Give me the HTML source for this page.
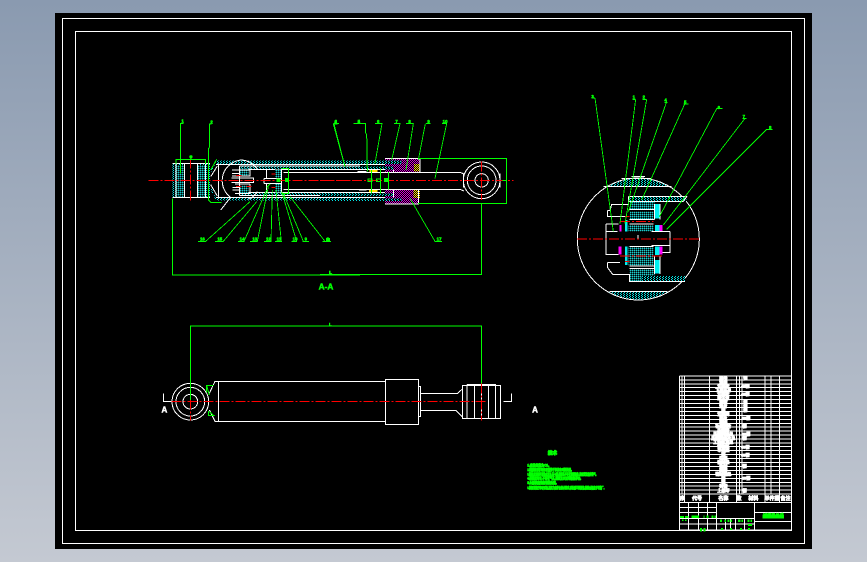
<!DOCTYPE html>
<html>
<head>
<meta charset="utf-8">
<style>
html,body{margin:0;padding:0;width:867px;height:562px;overflow:hidden;background:#8a9ab0}
svg{display:block}
.w{fill:none;stroke:#fff;stroke-width:3}
.g{fill:none;stroke:#00ff00;stroke-width:3}
.g1{fill:none;stroke:#00ff00;stroke-width:2.6}
.r{fill:none;stroke:#ff0000;stroke-width:3;stroke-dasharray:30 6 6 6}
text{font-family:"Liberation Sans","Noto Sans CJK SC",sans-serif}
.t{fill:#00ff00;stroke:#00ff00;stroke-width:1.6;font-size:13px;font-weight:bold}
.n{fill:#fff;stroke:#fff;stroke-width:2.6;font-size:12px;font-weight:bold;text-anchor:middle}
.h{fill:#fff;stroke:#fff;stroke-width:2.2;font-size:15px;font-weight:bold;text-anchor:middle}
.s{fill:#00ff00;stroke:#00ff00;stroke-width:2.6;font-size:11px;font-weight:bold}
</style>
</head>
<body>
<svg width="867" height="562" viewBox="0 0 867 562" xmlns="http://www.w3.org/2000/svg" shape-rendering="crispEdges">
<defs>
<linearGradient id="bg" x1="0" y1="0" x2="0" y2="1"><stop offset="0" stop-color="#8a9ab0"/><stop offset="1" stop-color="#c4c9d2"/></linearGradient>
<pattern id="c" width="9" height="6" patternUnits="userSpaceOnUse"><rect width="9" height="6" fill="#000"/><rect width="3" height="3" fill="#00e5e5"/><rect x="6" y="3" width="3" height="3" fill="#00e5e5"/></pattern>
<pattern id="cd" width="6" height="6" patternUnits="userSpaceOnUse"><rect width="6" height="6" fill="#075c5c"/><rect width="3" height="3" fill="#20c8c8"/><rect x="3" y="3" width="3" height="3" fill="#000"/></pattern>
<pattern id="m" width="6" height="6" patternUnits="userSpaceOnUse"><rect width="6" height="6" fill="#000"/><rect width="3" height="3" fill="#d000d0"/><rect x="3" y="3" width="3" height="3" fill="#d000d0"/></pattern>
<pattern id="y" width="6" height="6" patternUnits="userSpaceOnUse"><rect width="6" height="6" fill="#000"/><rect width="3" height="3" fill="#ffe000"/><rect x="3" y="3" width="3" height="3" fill="#ffe000"/></pattern>
<clipPath id="cc"><circle cx="205" cy="447" r="183"/></clipPath>
</defs>
<rect width="867" height="562" fill="url(#bg)"/>
<rect x="55" y="13" width="757" height="536" fill="#000"/>
<rect x="62.5" y="18.5" width="742" height="525" fill="none" stroke="#fff"/>
<rect x="75.5" y="31.5" width="716" height="499" fill="none" stroke="#fff"/>

<!-- Section A-A left part -->
<g transform="translate(140,110) scale(.33333)">
<rect x="97" y="162" width="36" height="100" fill="url(#c)"/>
<rect x="172" y="162" width="38" height="100" fill="url(#c)"/>
<rect x="110" y="165" width="22" height="95" fill="url(#cd)"/>
<rect x="172" y="165" width="24" height="95" fill="url(#cd)"/>
<path class="w" d="M97 161H210M97 262H210M133 160V262M172 160V262M108 162V262M197 162V262"/>
<rect x="228" y="152" width="432" height="10" fill="url(#c)"/>
<rect x="228" y="262" width="432" height="10" fill="url(#c)"/>
<rect x="298" y="170" width="362" height="8" fill="url(#c)"/>
<rect x="298" y="248" width="362" height="8" fill="url(#c)"/>
<path d="M232 150L212 190V230L232 272H228L208 232V188Z" fill="url(#c)"/>
<path class="w" d="M235 160V266M228 163H660M228 263H660M298 168H660M298 179H660M298 247H660M298 257H660M298 168V257M212 200L232 168M212 224L232 258M430 187H655M430 238H655"/>
<path class="w" d="M305 150A62 62 0 0 0 272 262L242 300M305 150A62 62 0 0 1 352 178M352 245A62 62 0 0 1 325 268"/>
<rect x="300" y="176" width="26" height="20" fill="url(#cd)"/>
<rect x="300" y="226" width="26" height="24" fill="url(#cd)"/>
<rect x="405" y="178" width="20" height="26" fill="url(#cd)"/>
<rect x="405" y="222" width="20" height="26" fill="url(#cd)"/>
<path class="w" d="M276 180H330M276 190H300M276 198H330M274 204H340V218H274M285 222H330M278 232H300M278 240H300M285 250H330M330 172V200M330 222V252M372 205H425M372 220H425M372 205V220M380 178V204M380 222V248M380 178H405M380 248H405M425 178V248"/>
<path d="M288 197H304M288 230H304M320 229H334M395 192H406M395 232H406" stroke="#f00" stroke-width="3"/>
<path class="r" d="M25 211H660"/>
<path class="r" d="M152 145V272"/>
<path class="g" d="M121 190V41H131M215 42H208V112L205 117V270L212 277H245M580 41L615 170M581 41H597M640 41H660M97 265V495H660M108 162V148H197V162M425 176H445V250H425M230 148L212 180"/>
<path class="g1" d="M174 394H197L330 275M225 394H250L350 275M294 394H312L380 240M330 394H352L385 230M372 394H393L397 240M405 394H424L408 240M455 394H470L425 245M488 394H507M490 394L430 250M548 394H573M555 394L450 260M380 232L390 222"/>
<rect x="410" y="206" width="12" height="10" fill="#0f0"/><rect x="435" y="204" width="10" height="12" fill="#0f0"/>
<text class="t" x="124" y="38">1</text><text class="t" x="211" y="40">2</text><text class="t" x="584" y="39">3</text><text class="t" x="653" y="39">4</text>
<text class="t" x="148" y="144">φ</text>
<text class="t" x="180" y="392">16</text><text class="t" x="232" y="392">15</text><text class="t" x="299" y="392">14</text><text class="t" x="337" y="392">13</text><text class="t" x="378" y="392">12</text><text class="t" x="410" y="392">11</text><text class="t" x="458" y="392">10</text><text class="t" x="494" y="392">9</text><text class="t" x="560" y="392">8</text>
<text class="t" x="568" y="492">L</text>
<text x="536" y="538" textLength="44" lengthAdjust="spacingAndGlyphs" style="font-size:25px;fill:#0f0;stroke:#0f0;stroke-width:1.5;font-weight:bold">A-A</text>
</g>

<!-- Section A-A right part -->
<g transform="translate(320,110) scale(.33333)">
<rect x="195" y="145" width="105" height="43" fill="url(#m)"/>
<rect x="195" y="238" width="100" height="44" fill="url(#m)"/>
<rect x="0" y="152" width="245" height="10" fill="url(#c)"/>
<rect x="0" y="265" width="245" height="8" fill="url(#c)"/>
<rect x="0" y="170" width="220" height="8" fill="url(#c)"/>
<rect x="0" y="250" width="220" height="8" fill="url(#c)"/>
<path d="M148 177H172V187H148ZM147 240H172V249H147Z" fill="#ffe000"/>
<path d="M282 162H300V184H282ZM280 240H300V264H280Z" fill="url(#y)"/>
<path class="w" d="M0 187H420M0 238H420M113 184H140M117 240H140M195 145H300V187M195 282H295V240M0 163H195M0 263H195M0 179H195M0 248H195M220 178V187M220 240V262M420 187L432 192M420 238L432 243"/>
<circle class="w" cx="485" cy="211" r="55"/>
<circle class="w" cx="485" cy="211" r="43"/>
<circle class="w" cx="485" cy="211" r="20"/>
<path class="w" d="M430 190V232M540 190V232"/>
<path class="r" d="M0 211H580"/>
<path class="r" d="M485 155V270"/>
<path class="g" d="M294 145H560V280H294M485 280V493H0M548 211H560M140 70L142 185M154 180V250M182 176V250M206 186V238M144 207H156V214H144ZM170 207H182V214H170Z"/>
<path class="g1" d="M40 42H52M42 42L75 170M100 41H136V70M165 41H186L165 160M222 41H240L215 150M258 41H280L258 180M318 41H332M316 41L295 150M366 41H380L345 205M270 265L345 394H366"/>
<rect x="192" y="204" width="14" height="12" fill="#0f0"/>
<text class="t" x="43" y="39">4</text><text class="t" x="113" y="39">5</text><text class="t" x="171" y="39">6</text><text class="t" x="226" y="39">7</text><text class="t" x="265" y="39">8</text><text class="t" x="322" y="39">9</text><text class="t" x="368" y="39">10</text>
<text class="t" x="350" y="392">17</text>
<text class="t" x="27" y="492">L</text>
<rect x="18" y="384" width="12" height="10" fill="#0f0"/>
</g>

<!-- Detail circle -->
<g transform="translate(570,90) scale(.33333)">
<g clip-path="url(#cc)">
<rect x="90" y="265" width="230" height="25" fill="url(#c)"/>
<rect x="90" y="604" width="230" height="25" fill="url(#c)"/>
</g>
<circle class="w" cx="205" cy="447" r="183"/>
<path class="w" d="M100 290H305M118 604H292M155 265H245M185 259H225"/>
<rect x="175" y="320" width="175" height="14" fill="url(#c)"/>
<rect x="180" y="334" width="74" height="24" fill="url(#cd)"/>
<rect x="180" y="365" width="70" height="23" fill="url(#cd)"/>
<rect x="175" y="405" width="75" height="20" fill="url(#cd)"/>
<rect x="175" y="470" width="75" height="58" fill="url(#cd)"/>
<rect x="178" y="536" width="76" height="39" fill="url(#cd)"/>
<rect x="215" y="558" width="130" height="17" fill="url(#c)"/>
<path d="M255 342H268V385H255ZM255 405H268V425H255ZM165 390H173V425H165ZM255 470H268V495H255ZM255 510H268V550H255ZM165 470H173V525H165Z" fill="#00f0f0"/>
<path d="M148 405H155V425H148ZM268 405H277V425H268ZM146 470H155V493H146ZM268 470H277V493H268Z" fill="#ff00ff"/>
<path class="w" d="M108 402H145M108 402V493H145M110 425H143M245 425H300M245 467H300V488H277M300 467V425M112 362H120L125 343H175V320M112 362V380H165M112 518V532L128 553H178V575H345M112 518H150M175 320H350L340 334H175M178 358H254M178 388H254M178 402H250M178 470H250M178 528H254M178 536H254M254 342V388M270 342V388M254 500V552M270 500V552"/>
<path d="M204 435V445" stroke="#fff" stroke-width="4"/>
<path class="r" d="M21 447H387"/>
<path class="r" d="M150 395H250"/>
<path class="r" d="M150 498H280"/>
<path d="M165 380H178M165 515H178" stroke="#f00" stroke-width="3"/>
<path class="g1" d="M75 24L130 425M65 24H75M197 28L150 400M188 28H197M230 28L165 400M218 28H230M290 35L175 365M284 37H293M345 40L215 330M340 42H356M440 56L268 380M440 56H458M525 85L280 405M518 86H530M590 118L290 418M590 118H608"/>
<text class="t" x="64" y="24">3</text><text class="t" x="188" y="25">1</text><text class="t" x="218" y="25">2</text><text class="t" x="283" y="35">4</text><text class="t" x="342" y="41">5</text><text class="t" x="443" y="57">6</text><text class="t" x="518" y="84">7</text><text class="t" x="597" y="117">8</text>
</g>

<!-- Outer view -->
<g transform="translate(150,315) scale(.33333)">
<circle class="w" cx="121" cy="260" r="55"/>
<circle class="w" cx="121" cy="260" r="43"/>
<circle class="w" cx="121" cy="260" r="22"/>
<path class="w" d="M205 199H706V319H205ZM178 235L195 199H205M178 285L195 319H205M706 193H805V328H706ZM805 215H812V305H805M812 236H922L937 222M812 286H918L937 305M937 212V310H1052V212ZM951 208H1036V310M951 208V310M973 208V310M994 208V310M1015 208V310M40 235V260H65M1060 260H1085V235"/>
<path class="r" d="M65 260H1010"/>
<path class="r" d="M121 205V316"/>
<path class="r" d="M994 205V316"/>
<path class="g" d="M121 255V33H994V205M190 212H170L178 240M170 212V232M175 288V302H192L178 290"/>
<text class="t" x="537" y="33">L</text>
<text x="43" y="293" text-anchor="middle" style="font-size:24px;fill:#fff;stroke:#fff;stroke-width:1.4;font-weight:bold">A</text>
<text x="1155" y="293" text-anchor="middle" style="font-size:24px;fill:#fff;stroke:#fff;stroke-width:1.4;font-weight:bold">A</text>
</g>

<!-- Technical notes -->
<g transform="translate(515,440) scale(.33333)">
<text x="99" y="44" textLength="27" lengthAdjust="spacingAndGlyphs" style="font-size:14px;fill:#0f0;stroke:#0f0;stroke-width:3;font-weight:bold">技术</text>
<text class="s" x="37" y="80" textLength="71" lengthAdjust="spacingAndGlyphs">1.未注倒角为C1。</text>
<text class="s" x="37" y="93" textLength="138" lengthAdjust="spacingAndGlyphs">2.装配前所有零件须清洗干净并去毛刺处理。</text>
<text class="s" x="37" y="106" textLength="211" lengthAdjust="spacingAndGlyphs">3.装配后活塞杆运动应灵活,无卡滞,密封处不得有渗漏现象,按规定注油并排气。</text>
<text class="s" x="37" y="119" textLength="166" lengthAdjust="spacingAndGlyphs">4.焊缝应均匀,不得有气孔,裂纹及夹渣等缺陷存在。</text>
<text class="s" x="37" y="132" textLength="93" lengthAdjust="spacingAndGlyphs">5.外露表面涂防锈漆处理。</text>
<text class="s" x="37" y="147" textLength="235" lengthAdjust="spacingAndGlyphs">6.按规定进行示功试验,阻尼力应符合技术要求,试验后不得漏油,检验合格后方可出厂。</text>
</g>

<!-- Title block -->
<g transform="translate(670,370) scale(.33333)">
<path class="w" d="M28 18H364M28 30H364M28 42H364M28 53H364M28 65H364M28 77H364M28 89H364M28 101H364M28 112H364M28 124H364M28 136H364M28 148H364M28 160H364M28 171H364M28 183H364M28 195H364M28 207H364M28 219H364M28 230H364M28 242H364M28 254H364M28 266H364M28 278H364M28 289H364M28 301H364M28 313H364M28 325H364M28 337H364M28 348H364M28 360H364M28 372H364M28 397H364"/>
<path class="w" d="M28 18V480M36 18V372M44 18V397M118 18V397M200 18V397M208 18V372M216 18V372M285 18V397M303 18V372M328 18V397M364 18V480M140 397V480M253 397V480M253 427H364M253 455H364M140 445H253M140 462H253M166 445V480M182 445V480M196 445V480M224 445V480M28 412H140M28 428H140M28 445H140M28 462H140M56 397V480M85 397V480M112 397V480M28 480H364"/>
<g>
<text class="n" x="160" y="28">螺母</text><text class="n" x="160" y="40">垫圈</text><text class="n" x="160" y="52">活塞杆</text><text class="n" x="160" y="64">下吊环总</text><text class="n" x="160" y="76">活塞杆</text><text class="n" x="160" y="88">防尘罩</text><text class="n" x="160" y="100">弹簧</text><text class="n" x="160" y="112">垫片</text><text class="n" x="160" y="124">阀</text><text class="n" x="160" y="136">活塞阀</text><text class="n" x="160" y="148">阀片</text><text class="n" x="160" y="160">阀座</text><text class="n" x="160" y="172">补偿阀片</text><text class="n" x="160" y="184">压缩阀</text><text class="n" x="160" y="196">压缩阀座总</text><text class="n" x="160" y="208">压缩阀座片总</text><text class="n" x="160" y="220">工作缸筒总</text><text class="n" x="160" y="232">储油缸</text><text class="n" x="160" y="244">导向座</text><text class="n" x="160" y="256">阀</text><text class="n" x="160" y="268">活塞</text><text class="n" x="160" y="280">油封盖</text><text class="n" x="160" y="292">油封</text><text class="n" x="160" y="304">挡圈</text><text class="n" x="160" y="316">密封圈总</text><text class="n" x="160" y="328">阀</text><text class="n" x="160" y="340">阀</text><text class="n" x="160" y="352">衬套</text><text class="n" x="160" y="366">上吊环</text>
<text class="n" x="226" y="28">钢</text><text class="n" x="226" y="52">45钢</text><text class="n" x="226" y="76">45钢</text><text class="n" x="226" y="100">钢</text><text class="n" x="226" y="112">钢</text><text class="n" x="226" y="124">钢</text><text class="n" x="228" y="148">45钢</text><text class="n" x="224" y="172">钢</text><text class="n" x="228" y="196">45钢</text><text class="n" x="224" y="208">钢</text><text class="n" x="226" y="236">45钢</text><text class="n" x="226" y="260">45钢</text><text class="n" x="224" y="292">钢</text><text class="n" x="228" y="328">45钢</text><text class="n" x="224" y="366">钢</text>
<text class="h" x="37" y="390">序</text><text class="h" x="81" y="390">代号</text><text class="h" x="160" y="390">名称</text><text class="h" x="207" y="390">数</text><text class="h" x="250" y="390">材料</text><text class="h" x="306" y="390">单件重</text><text class="h" x="347" y="390">备注</text>
</g>
<rect x="278" y="434" width="64" height="12" fill="#0f0"/>
<text x="310" y="441" text-anchor="middle" textLength="62" lengthAdjust="spacingAndGlyphs" style="font-size:13px;fill:#0f0;stroke:#0f0;stroke-width:1.2;font-weight:bold">减振器总成</text>
<path d="M30 438H42V444H30ZM45 438H56V444H45ZM64 437H87V444H64ZM100 437H104V444H100ZM110 437H116V444H110ZM125 437H130V444H125ZM133 437H138V444H133ZM36 448H41V453H36ZM45 448H50V453H45ZM90 474H96V484H90ZM100 474H106V484H100ZM150 448H156V456H150ZM163 448H168V456H163ZM172 448H178V456H172ZM182 448H186V456H182ZM204 448H212V456H204ZM215 448H219V456H215ZM232 448H238V456H232ZM241 448H246V456H241ZM234 462H246V468H234ZM153 474H159V480H153ZM180 474H186V480H180ZM210 474H216V480H210ZM234 474H240V480H234Z" fill="#0f0"/>
</g>
</svg>
</body>
</html>
